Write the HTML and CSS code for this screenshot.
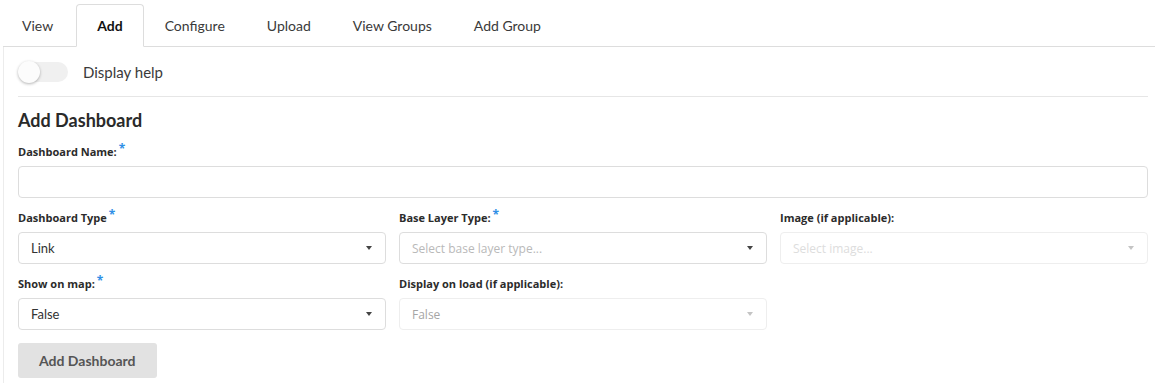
FILE: index.html
```html
<!DOCTYPE html>
<html lang="en">
<head>
    <meta charset="UTF-8">
    <title>Add Dashboard</title>
    <link rel="stylesheet" href="styles.css">
</head>
<body>
    <div class="page">
        <ul class="nav-tabs">
            <li><a href="#">View</a></li>
            <li class="active"><a href="#">Add</a></li>
            <li><a href="#">Configure</a></li>
            <li><a href="#">Upload</a></li>
            <li><a href="#">View Groups</a></li>
            <li><a href="#">Add Group</a></li>
        </ul>

        <div class="tab-panel">
            <div class="help-row">
                <span class="switch"><span class="knob"></span></span>
                <span class="help-label">Display help</span>
            </div>

            <hr class="divider">

            <h3 class="form-title">Add Dashboard</h3>

            <div class="field">
                <label>Dashboard Name:<span class="req">*</span></label>
                <input type="text" class="text-input">
            </div>

            <div class="field-grid">
                <div class="field">
                    <label>Dashboard Type<span class="req">*</span></label>
                    <div class="select">
                        <span>Link</span>
                        <span class="caret"></span>
                    </div>
                </div>
                <div class="field">
                    <label>Base Layer Type:<span class="req">*</span></label>
                    <div class="select placeholder">
                        <span>Select base layer type...</span>
                        <span class="caret"></span>
                    </div>
                </div>
                <div class="field">
                    <label>Image (if applicable):</label>
                    <div class="select disabled">
                        <span>Select image...</span>
                        <span class="caret"></span>
                    </div>
                </div>

                <div class="field">
                    <label>Show on map:<span class="req">*</span></label>
                    <div class="select">
                        <span>False</span>
                        <span class="caret"></span>
                    </div>
                </div>
                <div class="field">
                    <label>Display on load (if applicable):</label>
                    <div class="select disabled dim">
                        <span>False</span>
                        <span class="caret"></span>
                    </div>
                </div>
            </div>

            <button class="btn-add">Add Dashboard</button>
        </div>
    </div>
</body>
</html>
```

FILE: styles.css
```css
:root {
    --text-color: #333333;
    --tab-color: #3a3a3a;
    --border-color: #dddddd;
    --border-light: #ececec;
    --required: #2f8fe6;
    --muted: #b5b5b5;
}

body {
    margin: 0;
    padding: 0;
    background: #ffffff;
    color: var(--text-color);
    font-family: 'Lato', 'Liberation Sans', sans-serif;
}

.page {
    padding-left: 3px;
}

/* tabs */
.nav-tabs {
    list-style: none;
    margin: 0;
    padding: 4px 0 0 0;
    display: flex;
    border-bottom: 1px solid var(--border-color);
}

.nav-tabs li {
    margin-bottom: -1px;
}

.nav-tabs a {
    display: block;
    padding: 0 20px;
    height: 41px;
    line-height: 41px;
    font-size: 14px;
    color: var(--tab-color);
    text-decoration: none;
    border: 1px solid transparent;
    border-radius: 4px 4px 0 0;
}

.nav-tabs li:first-child a {
    padding-left: 18px;
    padding-right: 22px;
}

.nav-tabs .active a {
    font-weight: 700;
    color: #111;
    border-color: var(--border-color);
    border-bottom-color: #ffffff;
    background: #ffffff;
}

.tab-panel {
    border-left: 1px solid var(--border-light);
    padding: 14px 7px 5px 14px;
    min-height: 320px;
}

/* help toggle */
.help-row {
    display: flex;
    align-items: center;
    gap: 15px;
    height: 21px;
}

.switch {
    position: relative;
    width: 50px;
    height: 20px;
    border-radius: 10px;
    background: #f0f0f0;
}

.switch .knob {
    position: absolute;
    left: 0;
    top: -1px;
    width: 22px;
    height: 22px;
    border-radius: 50%;
    background: #fcfcfc;
    box-shadow: 0 1px 3px rgba(0, 0, 0, 0.3);
}

.help-label {
    font-size: 15px;
    color: var(--tab-color);
}

.divider {
    border: none;
    border-top: 1px solid #e6e6e6;
    margin: 14px 0 0 0;
}

.form-title {
    font-size: 18px;
    font-weight: 700;
    margin: 12px 0 0 0;
    line-height: 22px;
    color: #2a2a2a;
}

/* fields */
.field label {
    display: block;
    font-family: 'Open Sans', 'Liberation Sans', sans-serif;
    font-weight: 700;
    font-size: 11px;
    line-height: 15px;
    margin: 12px 0 7px 0;
    color: #2b2b2b;
}

.form-title + .field label {
    margin-top: 13px;
}

.field .req {
    color: var(--required);
    font-size: 12px;
    margin-left: 2px;
    position: relative;
    top: -3px;
}

.text-input {
    display: block;
    box-sizing: border-box;
    width: 100%;
    height: 32px;
    border: 1px solid var(--border-color);
    border-radius: 4px;
    margin: 0;
}

.field-grid {
    display: grid;
    grid-template-columns: repeat(3, 1fr);
    column-gap: 13px;
}

.select {
    box-sizing: border-box;
    height: 32px;
    border: 1px solid var(--border-color);
    border-radius: 4px;
    display: flex;
    align-items: center;
    justify-content: space-between;
    padding: 0 13px 0 12px;
    font-size: 13px;
    color: var(--text-color);
}

.select .caret {
    width: 0;
    height: 0;
    border-left: 3px solid transparent;
    border-right: 3px solid transparent;
    border-top: 4px solid #444;
}

.select.placeholder {
    font-family: 'Open Sans', 'Liberation Sans', sans-serif;
    color: #b9b9b9;
    font-size: 12px;
}

.select.disabled {
    font-family: 'Open Sans', 'Liberation Sans', sans-serif;
    border-color: #eeeeee;
    color: #dddddd;
    font-size: 12px;
}

.select.disabled .caret {
    border-top-color: #c4c4c4;
}

.select.dim {
    color: #a5a5a5;
}

.btn-add {
    margin-top: 13px;
    height: 35px;
    padding: 0 21px;
    border: none;
    border-radius: 3px;
    background: #e2e2e2;
    color: #555555;
    font-family: 'Lato', 'Liberation Sans', sans-serif;
    font-weight: 700;
    font-size: 14px;
}
```
